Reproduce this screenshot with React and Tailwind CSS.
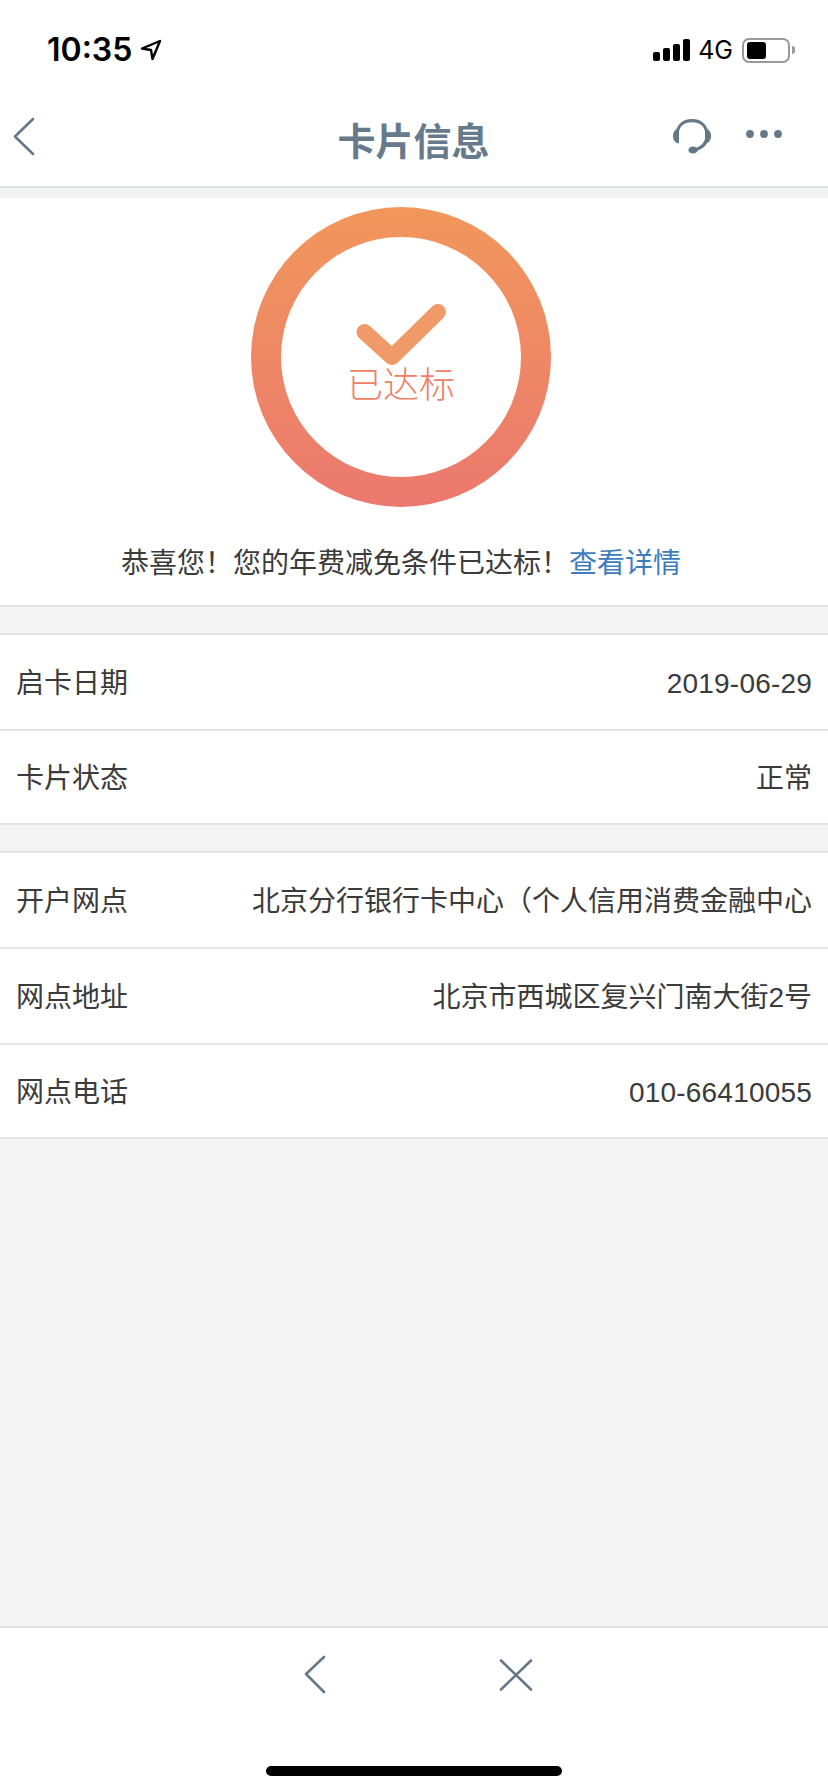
const cjk = { fontFamily: '"Liberation Sans", "Noto Sans CJK SC", sans-serif' };

function StatusBar() {
  return (
    <div className="h-[90px] flex items-start justify-between pt-[36px] pl-[47px] pr-[33px]">
      <div className="flex items-center gap-[8px] h-[28px]">
        <span className="text-[32px] leading-[28px] font-semibold text-black" style={{ fontFamily: 'Inter, sans-serif' }}>10:35</span>
        <svg width="22" height="22" viewBox="0 0 22 22" fill="none">
          <path d="M2 9.5 L20 2 L12.5 20 L11 11 Z" stroke="#000" strokeWidth="2.4" strokeLinejoin="round" />
        </svg>
      </div>
      <div className="flex items-center h-[28px]">
        <svg width="37" height="24" viewBox="0 0 37 24" fill="#000">
          <rect x="0" y="14" width="7" height="9" rx="2" />
          <rect x="10" y="10" width="7" height="13" rx="2" />
          <rect x="20" y="6" width="7" height="17" rx="2" />
          <rect x="30" y="1" width="7" height="22" rx="2" />
        </svg>
        <span className="ml-[8px] text-[25px] leading-[28px] text-black" style={{ fontFamily: 'Inter, sans-serif' }}>4G</span>
        <div className="ml-[9px] w-[48px] h-[25px] rounded-[7px] border-2 border-[#9a9a9a] p-[2px] pl-[3px] bg-white">
          <div className="w-[19px] h-full rounded-[3px] bg-black" />
        </div>
        <div className="ml-[2px] w-[3px] h-[8px] rounded-r-[3px] bg-[#9a9a9a]" />
      </div>
    </div>
  );
}

function NavBar() {
  return (
    <div className="h-[98px] grid grid-cols-[1fr_auto_1fr] items-center border-b-2 border-[#dde2e8]">
      <div className="pl-[13px] pb-[2px]">
        <svg width="22" height="40" viewBox="0 0 22 40" fill="none" className="block">
          <path d="M20 2 L2 19.5 L20 37" stroke="#64788a" strokeWidth="2.6" strokeLinecap="round" strokeLinejoin="round" />
        </svg>
      </div>
      <div className="text-[38px] leading-[50px] font-bold text-[#677a8b] pt-[7px] pr-[1px]" style={cjk}>卡片信息</div>
      <div className="flex items-center justify-end pr-[46px] gap-[35px] pb-[3px]">
        <svg width="38" height="35" viewBox="0 0 38 35" fill="none" className="block">
          <path d="M4 17 C4 7 10 1.7 19 1.7 C28 1.7 34 7 34 17 C34 24 29 29 21 31" stroke="#64788a" strokeWidth="3.2" />
          <path d="M6 9.5 L6 24.5 C2 24 0 21 0 17 C0 13 2 10 6 9.5 Z" fill="#64788a" />
          <path d="M32 9.5 L32 24.5 C36 24 38 21 38 17 C38 13 36 10 32 9.5 Z" fill="#64788a" />
          <ellipse cx="20" cy="31" rx="4.6" ry="3.6" fill="#64788a" />
        </svg>
        <svg width="36" height="8" viewBox="0 0 36 8" fill="#64788a" className="block mb-[5px]">
          <circle cx="4" cy="4" r="3.9" />
          <circle cx="18" cy="4" r="3.9" />
          <circle cx="32" cy="4" r="3.9" />
        </svg>
      </div>
    </div>
  );
}

function Badge() {
  return (
    <div className="w-[300px] h-[300px] rounded-full bg-gradient-to-b from-[#f1975a] to-[#eb786e] p-[30px]">
      <div className="w-full h-full rounded-full bg-white flex flex-col items-center pt-[66px]">
        <svg width="92" height="63" viewBox="0 0 92 63" fill="none" className="block">
          <path d="M9.5 29 L37 54 L83 9" stroke="#f19a69" strokeWidth="16" strokeLinecap="round" strokeLinejoin="round" />
        </svg>
        <span className="text-[36px] leading-[40px] font-light text-[#ee8066]" style={cjk}>已达标</span>
      </div>
    </div>
  );
}

function Row({ label, value, numeric }) {
  return (
    <div className="h-[96px] last:h-[94px] flex items-center justify-between px-[16px] pt-[3px] bg-white border-b-2 border-[#e3e3e3] text-[28px] text-[#3b3b3b]" style={cjk}>
      <span className="whitespace-nowrap">{label}</span>
      <span className={numeric ? 'whitespace-nowrap tracking-[0.2px]' : 'whitespace-nowrap'}>{value}</span>
    </div>
  );
}

function Group({ rows }) {
  return (
    <div className="mt-[26px] border-t-2 border-[#e3e3e3]">
      {rows.map(([label, value, numeric]) => <Row key={label} label={label} value={value} numeric={numeric} />)}
    </div>
  );
}

export default function App() {
  return (
    <div className="w-[828px] h-[1792px] flex flex-col bg-[#f3f3f3]" style={cjk}>
      <div className="bg-white">
        <StatusBar />
        <NavBar />
      </div>

      <div className="mt-[10px] h-[409px] bg-white border-b-2 border-[#e3e3e3] flex flex-col items-center pt-[9px] pr-[26px]">
        <Badge />
        <p className="mt-[37px] text-[28px] leading-[40px] text-[#3b3b3b] whitespace-nowrap">
          恭喜您！您的年费减免条件已达标！<span className="text-[#3f7cbd]">查看详情</span>
        </p>
      </div>

      <Group rows={[['启卡日期', '2019-06-29', true], ['卡片状态', '正常']]} />
      <Group rows={[['开户网点', '北京分行银行卡中心（个人信用消费金融中心'], ['网点地址', '北京市西城区复兴门南大街2号'], ['网点电话', '010-66410055', true]]} />

      <div className="mt-auto h-[166px] bg-white border-t-2 border-[#dfdfdf] flex flex-col items-center">
        <div className="flex items-center gap-[173px] pt-[27px] pl-[9px]">
          <svg width="22" height="40" viewBox="0 0 22 40" fill="none" className="block">
            <path d="M20 2 L2 19 L20 37" stroke="#64788a" strokeWidth="2.6" strokeLinecap="round" strokeLinejoin="round" />
          </svg>
          <svg width="34" height="32" viewBox="0 0 34 32" fill="none" className="block">
            <path d="M2 1.5 L32 30.5 M32 1.5 L2 30.5" stroke="#64788a" strokeWidth="2.6" strokeLinecap="round" />
          </svg>
        </div>
        <div className="mt-auto mb-[16px] w-[296px] h-[10px] rounded-full bg-black" />
      </div>
    </div>
  );
}
